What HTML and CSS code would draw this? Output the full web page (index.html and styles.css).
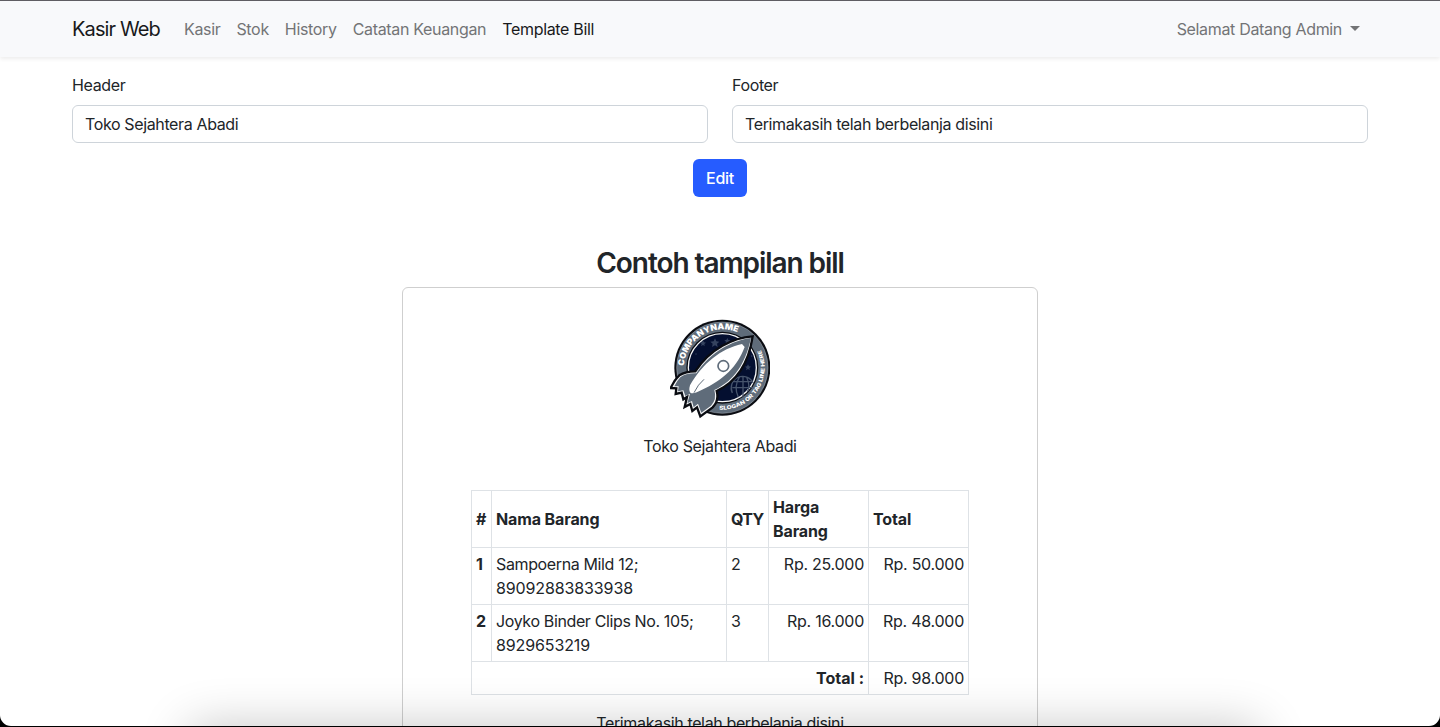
FILE: index.html
```html
<!DOCTYPE html>
<html lang="id">
<head>
<meta charset="utf-8">
<title>Kasir Web</title>
<link rel="stylesheet" href="styles.css">
</head>
<body>
<div class="window">
  <nav class="navbar">
    <div class="container navbar-inner">
      <a class="brand">Kasir Web</a>
      <div class="nav-links">
        <a class="nav-link">Kasir</a>
        <a class="nav-link">Stok</a>
        <a class="nav-link">History</a>
        <a class="nav-link">Catatan Keuangan</a>
        <a class="nav-link active">Template Bill</a>
      </div>
      <a class="nav-link user">Selamat Datang Admin<span class="caret"></span></a>
    </div>
  </nav>
  <main class="container">
    <form class="form">
      <div class="fields">
        <div class="field"><label>Header</label><div class="control">Toko Sejahtera Abadi</div></div>
        <div class="field"><label>Footer</label><div class="control">Terimakasih telah berbelanja disini</div></div>
      </div>
      <button class="btn" type="button">Edit</button>
    </form>
    <h3 class="title">Contoh tampilan bill</h3>
    <section class="card">
      <svg class="logo" viewBox="30 27 300 300">
        <defs>
          <path id="arcTop" d="M72 168 A116 116 0 0 1 262 85"/>
          <path id="arcSide" d="M178 299 A127 127 0 0 0 289 97"/>
        </defs>
        <circle cx="187" cy="173" r="144" fill="#0a0c12"/>
        <circle cx="187" cy="173" r="137" fill="#5f6c7a" stroke="#a9b0b8" stroke-width="1.5"/>
        <circle cx="187" cy="173" r="108" fill="#0a0c12"/>
        <circle cx="187" cy="173" r="102" fill="#040f30" stroke="#f6f7f8" stroke-width="4"/>
        <g fill="#35435f">
          <path d="M165 85l4 9 9 1-7 6 2 10-8-5-9 5 2-10-7-6 10-1z"/>
          <path d="M202 84l3 6 6 1-5 4 1 7-5-4-6 4 2-7-5-4 6-1z"/>
          <path d="M129 91l3 6 6 1-5 4 1 6-5-3-6 3 2-6-5-4 6-1z"/>
          <path d="M264 163l3 6 6 1-5 4 1 7-5-4-6 4 2-7-5-4 6-1z"/>
          <circle cx="226" cy="196" r="3"/><circle cx="108" cy="132" r="2"/><circle cx="275" cy="138" r="2"/>
        </g>
        <g fill="none" stroke="#46546c" stroke-width="4">
          <path d="M217 249A34 34 0 0 1 280 219M217 233H280M219 215H278M249 199V262M239 200Q220 229 235 262M260 202Q272 229 262 246"/>
        </g>
        <path d="M278 79C220 83 151 116 106 184Q76 184 58 196Q43 210 32 234L49 235L47 252L65 248L70 268L81 261L74 291L91 282L97 303L111 292L121 319L158 292Q178 272 170 243C230 215 266 158 278 79Z" fill="#f5f6f7" stroke="#0a0c12" stroke-width="7" stroke-linejoin="miter"/>
        <path d="M273 84C218 91 154 124 109 190Q77 189 61 202Q52 211 43 229L56 229L54 244L70 241L76 258L90 251L82 280L96 273L101 292L114 281L124 308L153 287Q171 268 163 240C224 212 257 158 273 84Z" fill="#5f6c7a"/>
        <path d="M246 102C182 116 128 160 90 226Q85 243 92 249Q101 253 123 241C192 209 232 169 254 111Z" fill="#fff"/>
        <circle cx="190" cy="168" r="16" fill="#fff" stroke="#5f6c7a" stroke-width="5"/>
        <path d="M132 208Q114 223 102 248" fill="none" stroke="#5f6c7a" stroke-width="3"/>
        <text class="logo-name"><textPath href="#arcTop" textLength="222" lengthAdjust="spacingAndGlyphs">COMPANYNAME</textPath></text>
        <text class="logo-tag"><textPath href="#arcSide" textLength="262" lengthAdjust="spacingAndGlyphs">SLOGAN OR TAG LINE HERE</textPath></text>
      </svg>
      <p class="shop">Toko Sejahtera Abadi</p>
      <table class="bill">
        <colgroup><col class="c-no"><col class="c-name"><col class="c-qty"><col class="c-price"><col class="c-total"></colgroup>
        <thead>
          <tr><th>#</th><th>Nama Barang</th><th class="qty">QTY</th><th>Harga Barang</th><th>Total</th></tr>
        </thead>
        <tbody>
          <tr><th>1</th><td>Sampoerna Mild 12;<br><span class="code">89092883833938</span></td><td>2</td><td class="num">Rp. 25.000</td><td class="num">Rp. 50.000</td></tr>
          <tr><th>2</th><td>Joyko Binder Clips No. 105;<br><span class="code">8929653219</span></td><td>3</td><td class="num">Rp. 16.000</td><td class="num">Rp. 48.000</td></tr>
          <tr><th class="num sum" colspan="4">Total :</th><td class="num">Rp. 98.000</td></tr>
        </tbody>
      </table>
      <p class="note">Terimakasih telah berbelanja disini</p>
    </section>
  </main>
  <div class="bottom-shadow"></div>
</div>
</body>
</html>
```
FILE: styles.css
```css
* { box-sizing: border-box; }
body {
  margin: 0;
  height: 727px;
  overflow: hidden;
  background: #000;
  color: #212529;
  font: 400 16px/24px Inter, "Liberation Sans", sans-serif;
  letter-spacing: -0.37px;
}
.window {
  position: relative;
  height: 726px;
  overflow: hidden;
  background: #fff;
  border-top: 1px solid #5f5d63;
  border-radius: 0 0 11px 11px;
}
.container { width: 1320px; margin: 0 auto; padding: 0 12px; }
.navbar { height: 56px; background: #f8f9fb; box-shadow: 0 2px 4px rgba(0, 0, 0, .075); }
.navbar-inner { display: flex; align-items: center; height: 56px; }
.brand { margin-right: 16px; font-size: 20px; line-height: 30px; letter-spacing: -0.87px; color: #18191b; }
.nav-links { display: flex; flex: 1; }
.nav-link { padding: 8px; color: #737476; letter-spacing: -0.33px; }
.nav-link.active { color: #18191b; }
.caret {
  display: inline-block;
  margin-left: 8px;
  vertical-align: 4px;
  border-top: 5px solid;
  border-left: 5px solid transparent;
  border-right: 5px solid transparent;
}
.form { display: flex; flex-direction: column; align-items: center; gap: 16px; padding-top: 16px; }
.fields { display: flex; gap: 24px; width: 100%; }
.field { display: flex; flex: 1; flex-direction: column; gap: 8px; }
.control { height: 38px; padding: 6px 12px; border: 1px solid #ced4da; border-radius: 6px; }
.btn {
  height: 38px;
  width: 54px;
  padding: 0;
  border: 0;
  border-radius: 6px;
  background: #265cff;
  color: #fff;
  font: inherit;
  font-weight: 450;
  letter-spacing: -0.3px;
}
.title { margin: 49px 0 7px; font-size: 28px; line-height: 34px; font-weight: 600; text-align: center; letter-spacing: -1.07px; }
.card {
  display: flex;
  flex-direction: column;
  align-items: center;
  width: 636px;
  height: 520px;
  margin: 0 auto;
  padding-top: 31px;
  border: 1px solid #cfcfcf;
  border-radius: 6px;
}
.logo { width: 100px; height: 100px; }
.logo-name { font: 900 25px Inter, sans-serif; letter-spacing: 0; fill: #fff; }
.logo-tag { font: 800 16px Inter, sans-serif; letter-spacing: 0; fill: #fff; }
.shop { margin: 15px 0 32px; }
.bill { width: 498px; table-layout: fixed; border-collapse: collapse; }
.bill th, .bill td { padding: 4px; border: 1px solid #dee2e6; text-align: left; vertical-align: top; }
.bill th { font-weight: 700; letter-spacing: -0.12px; }
.bill .qty { letter-spacing: -0.6px; }
.bill thead th { vertical-align: middle; }
.bill .num { text-align: right; letter-spacing: -0.26px; }
.bill .sum { letter-spacing: 0; }
.code { letter-spacing: -0.12px; }
.c-no { width: 20px; }
.c-name { width: 235px; }
.c-qty { width: 42px; }
.c-price { width: 100px; }
.c-total { width: 100px; }
.note { margin: 16px 0 0; }
.bottom-shadow {
  position: absolute;
  left: 190px;
  right: 182px;
  top: 727px;
  height: 80px;
  box-shadow: 0 0 50px rgba(0, 0, 0, .24);
}
```
